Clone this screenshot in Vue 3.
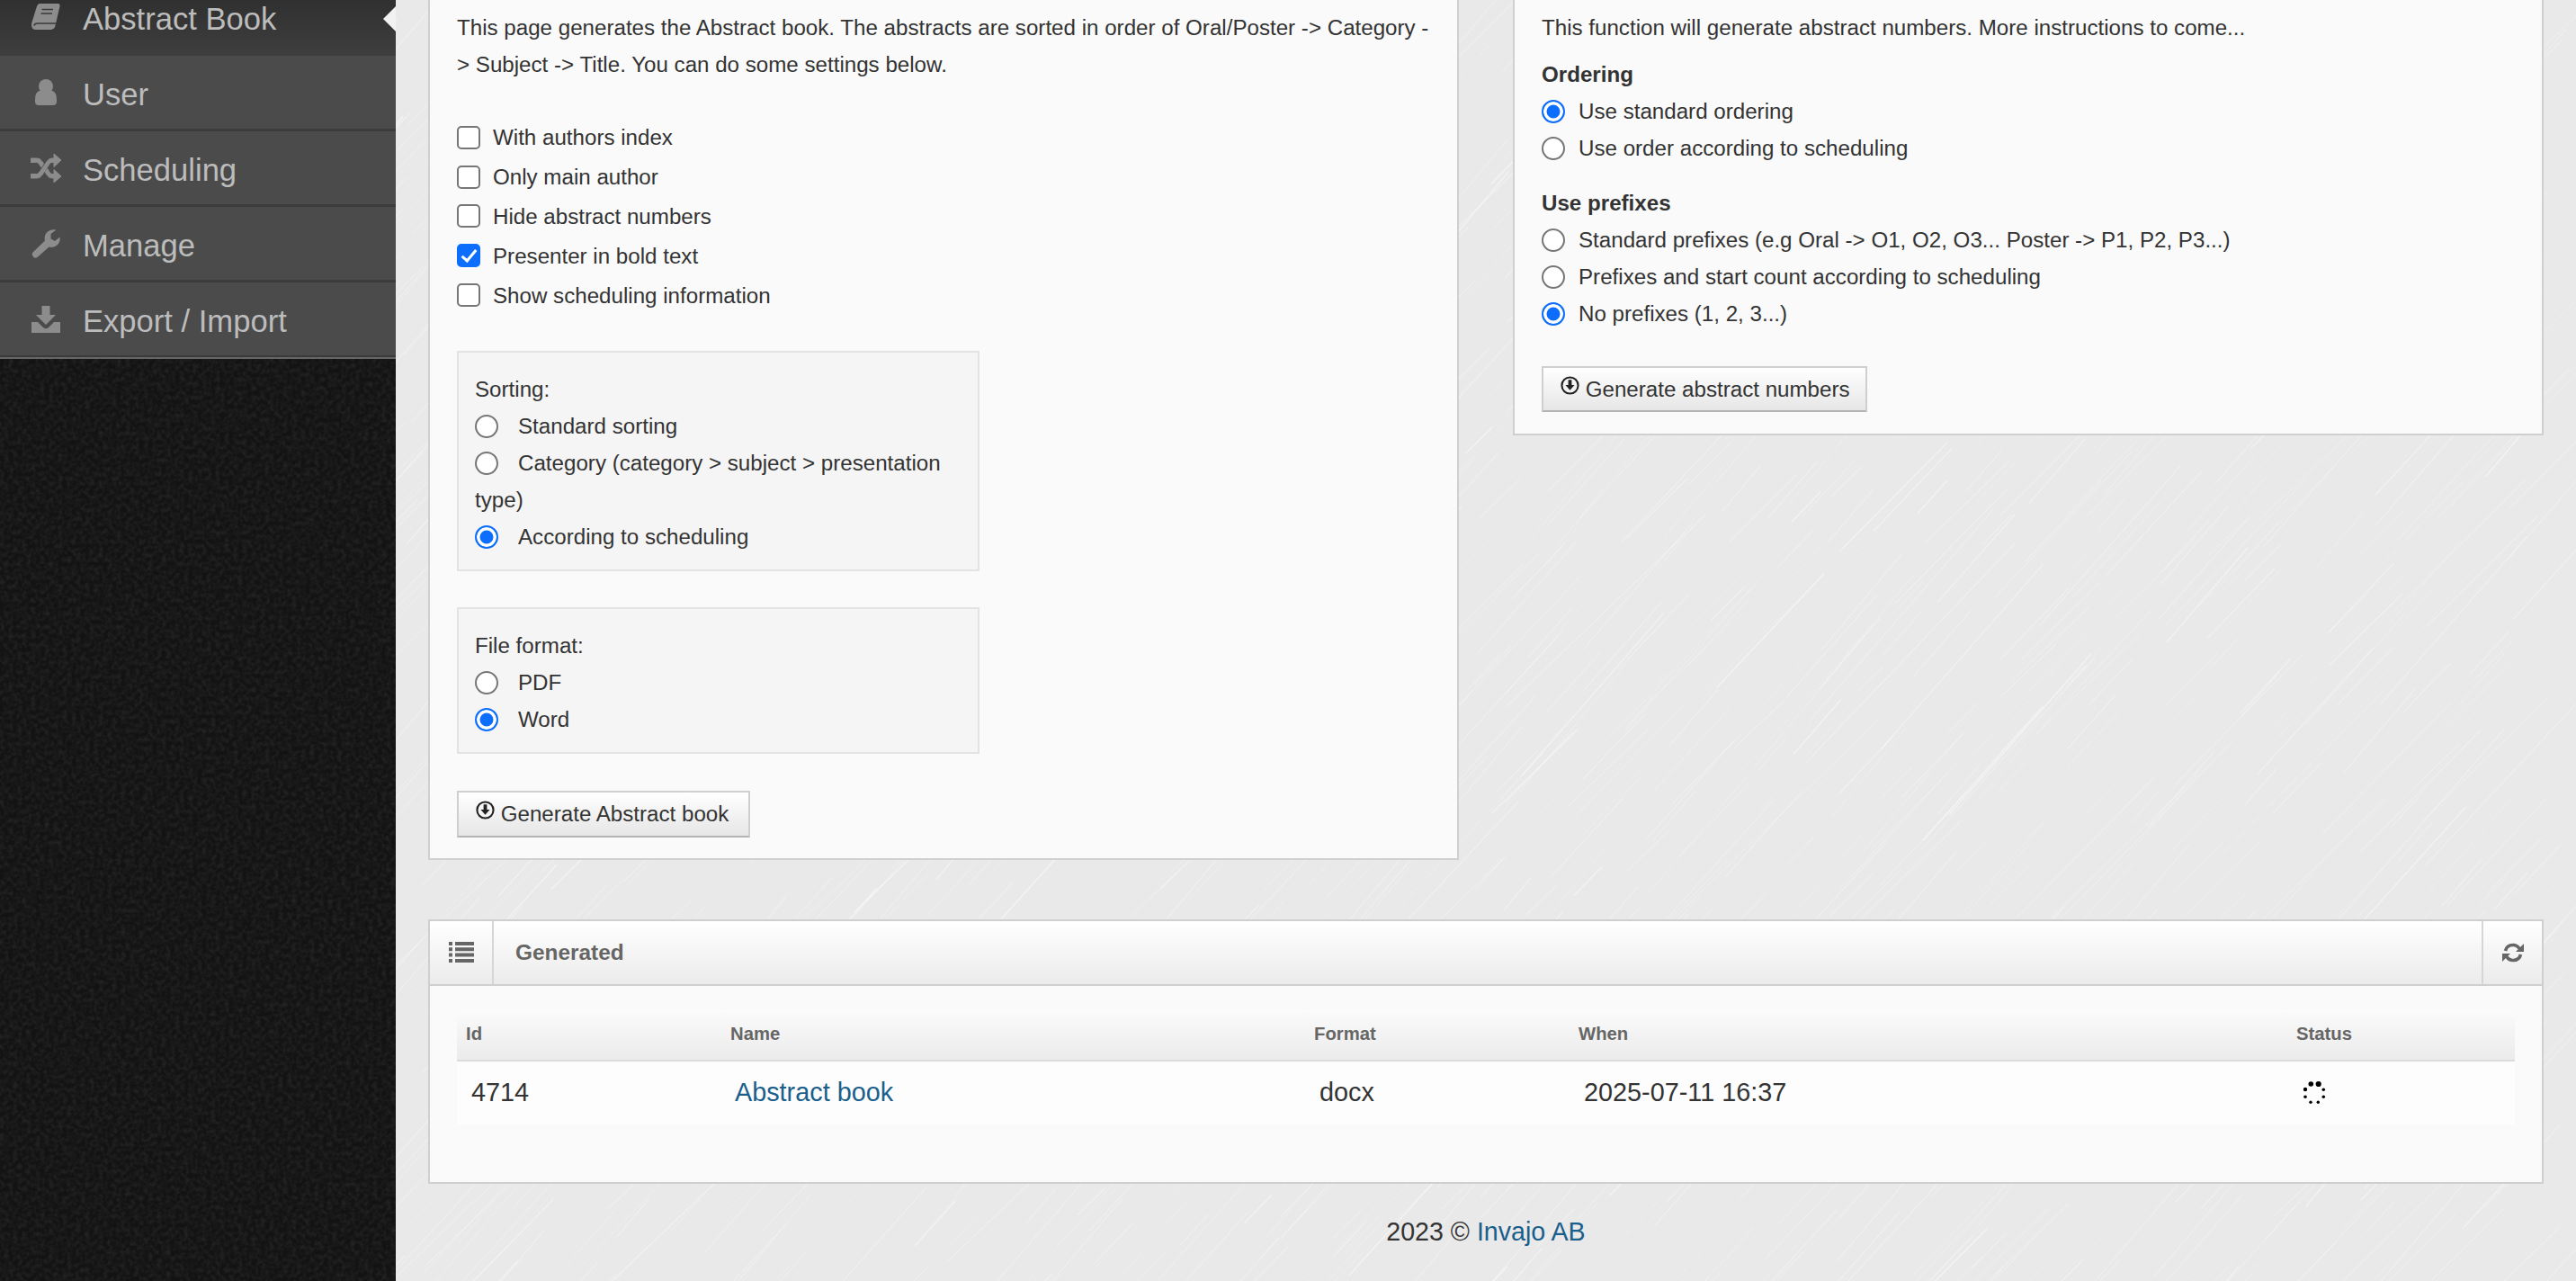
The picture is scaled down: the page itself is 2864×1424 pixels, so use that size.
<script setup>
function makeLines() {
  let s = 12345
  const r = () => {
    s = (s * 16807) % 2147483647
    return s / 2147483647
  }
  const out = []
  for (let i = 0; i < 1500; i++) {
    const x = r() * 2500 + 300
    const y = r() * 1550
    const len = 30 + r() * r() * 220
    const k = 0.95 + r() * 0.25
    out.push({
      id: i,
      x1: x,
      y1: y,
      x2: x + len,
      y2: y - len * k,
      o: 0.14 + r() * 0.32,
      w: r() > 0.8 ? 1.5 : 1
    })
  }
  return out
}
const lines = makeLines()

const checks = [
  { label: 'With authors index', on: false },
  { label: 'Only main author', on: false },
  { label: 'Hide abstract numbers', on: false },
  { label: 'Presenter in bold text', on: true },
  { label: 'Show scheduling information', on: false }
]
const sorting = [
  { label: 'Standard sorting', on: false },
  { label: 'Category (category > subject > presentation type)', on: false },
  { label: 'According to scheduling', on: true }
]
const formats = [
  { label: 'PDF', on: false },
  { label: 'Word', on: true }
]
const ordering = [
  { label: 'Use standard ordering', on: true },
  { label: 'Use order according to scheduling', on: false }
]
const prefixes = [
  { label: 'Standard prefixes (e.g Oral -> O1, O2, O3... Poster -> P1, P2, P3...)', on: false },
  { label: 'Prefixes and start count according to scheduling', on: false },
  { label: 'No prefixes (1, 2, 3...)', on: true }
]
const dots = [
  [-3.7, -10, 2.8], [4.7, -10, 3.1], [-10, -4, 2.2], [10.3, -3.7, 1.8],
  [-10, 4.3, 1.8], [10.3, 4.3, 1.8], [-4, 10.3, 1.7], [4.3, 10.3, 1.7]
]
</script>

<template>
  <div class="app">
    <svg class="texture" width="2864" height="1424" aria-hidden="true">
      <line
        v-for="l in lines"
        :key="l.id"
        :x1="l.x1"
        :y1="l.y1"
        :x2="l.x2"
        :y2="l.y2"
        stroke="#fff"
        :stroke-opacity="l.o"
        :stroke-width="l.w"
      />
    </svg>

    <aside class="sidebar">
      <svg class="noise" width="440" height="1424" aria-hidden="true">
        <filter id="grain">
          <feTurbulence type="fractalNoise" baseFrequency="0.2" numOctaves="2" seed="4" />
          <feColorMatrix type="matrix" values="0 0 0 0 0.4  0 0 0 0 0.4  0 0 0 0 0.4  0.22 0 0 0 -0.08" />
        </filter>
        <rect width="440" height="1424" filter="url(#grain)" />
      </svg>
      <nav class="menu">
        <a class="item active">
          <svg class="ico" viewBox="0 0 32 30">
            <path d="M9 0H29.500Q32 0 31.500 3L26.500 24.500Q26 28 22 29H5Q0 29 0 24Q0 22 .7 20L6 3Q7 0 9 0Z" />
            <path class="cut" d="M11.500 6.500H24M10.500 11H23M3 24.500Q3.500 22 6.500 22H27" />
          </svg>
          <span>Abstract Book</span>
          <i class="arrow"></i>
        </a>
        <a class="item">
          <svg class="ico" viewBox="0 0 32 32">
            <circle cx="16" cy="9" r="8" />
            <path d="M4 26V23Q4 14 11 13.500Q16 17.500 21 13.500Q28 14 28 23V26Q28 30 24 30H8Q4 30 4 26Z" />
          </svg>
          <span>User</span>
        </a>
        <a class="item">
          <svg class="ico shuffle" viewBox="0 0 34 32">
            <path d="M0 5H7Q10.500 5 12.500 8L14.500 11L11.800 15L9 10.500Q8 9.500 6.500 9.500H0ZM0 27V22.500H6.500Q8 22.500 9 21.500L18.500 8Q20.500 5 24 5H26V0L34 7L26 14.500V9.500H24Q22.500 9.500 21.500 10.500L12.500 24Q10.500 27 7 27ZM16 20L18.800 16.500L21.500 21Q22.500 22.500 24 22.500H26V17.500L34 25L26 32V27H24Q20.500 27 18.500 24Z" />
          </svg>
          <span>Scheduling</span>
        </a>
        <a class="item">
          <svg class="ico" viewBox="0 0 32 32">
            <path d="M1.500 25.500L15 12.500Q13.500 6.500 18 2.500Q22 -.5 27.500 .5L21.500 5V10.500L26 13L31.500 8.500Q32.500 14 28.500 17.500Q24.500 21 19.500 19.500L6.500 31Q4.500 32.500 2.500 31Q-.5 28 1.500 25.500Z" />
          </svg>
          <span>Manage</span>
        </a>
        <a class="item last">
          <svg class="ico" viewBox="0 0 32 30">
            <path d="M11.500 0H20.500V10H27L16 21L5 10H11.500Z" />
            <path d="M0 18H7L13 24Q16 26.500 19 24L25 18H32V30H0Z" />
          </svg>
          <span>Export / Import</span>
        </a>
      </nav>
    </aside>

    <main class="main">
      <div class="top">
        <section class="panel left">
          <p class="intro">This page generates the Abstract book. The abstracts are sorted in order of Oral/Poster -&gt; Category -&gt; Subject -&gt; Title. You can do some settings below.</p>
          <div class="checks">
            <label v-for="c in checks" :key="c.label" class="check">
              <input type="checkbox" :checked="c.on" />
              <span>{{ c.label }}</span>
            </label>
          </div>
          <div class="well">
            <div>Sorting:</div>
            <label v-for="o in sorting" :key="o.label" class="inline-radio">
              <input type="radio" name="sorting" :checked="o.on" />{{ o.label }}
            </label>
          </div>
          <div class="well">
            <div>File format:</div>
            <label v-for="o in formats" :key="o.label" class="inline-radio">
              <input type="radio" name="format" :checked="o.on" />{{ o.label }}
            </label>
          </div>
          <button class="btn btn-book" type="button">
            <svg class="btn-ico" viewBox="0 0 22 22">
              <circle cx="11" cy="11" r="9.500" />
              <path d="M9 4.500H13V10.500H16.300L11 16.500L5.700 10.500H9Z" />
            </svg>
            Generate Abstract book
          </button>
        </section>

        <section class="panel right">
          <p class="lead">This function will generate abstract numbers. More instructions to come...</p>
          <h4>Ordering</h4>
          <label v-for="o in ordering" :key="o.label" class="radio-row">
            <input type="radio" name="ordering" :checked="o.on" />
            <span>{{ o.label }}</span>
          </label>
          <h4 class="second">Use prefixes</h4>
          <label v-for="o in prefixes" :key="o.label" class="radio-row">
            <input type="radio" name="prefix" :checked="o.on" />
            <span>{{ o.label }}</span>
          </label>
          <button class="btn btn-num" type="button">
            <svg class="btn-ico" viewBox="0 0 22 22">
              <circle cx="11" cy="11" r="9.500" />
              <path d="M9 4.500H13V10.500H16.300L11 16.500L5.700 10.500H9Z" />
            </svg>
            Generate abstract numbers
          </button>
        </section>
      </div>

      <section class="panel generated">
        <header class="head">
          <div class="head-ico">
            <svg width="28" height="23" viewBox="0 0 28 23">
              <path d="M0 0H4V4H0ZM7 0H28V4H7ZM0 6.300H4V10.300H0ZM7 6.300H28V10.300H7ZM0 12.600H4V16.600H0ZM7 12.600H28V16.600H7ZM0 18.900H4V22.900H0ZM7 18.900H28V22.900H7Z" />
            </svg>
          </div>
          <h3>Generated</h3>
          <div class="head-refresh">
            <svg width="24" height="24" viewBox="0 0 24 24">
              <path class="arc" d="M3.500 10Q5 3.500 12 3.500Q16.500 3.500 19 7.500" />
              <path d="M24 2V11H15Z" />
              <path class="arc" d="M20.500 14Q19 20.500 12 20.500Q7.500 20.500 5 16.500" />
              <path d="M0 22V13H9Z" />
            </svg>
          </div>
        </header>
        <div class="body">
          <table>
            <colgroup>
              <col class="c1" /><col class="c2" /><col class="c3" /><col class="c4" /><col class="c5" />
            </colgroup>
            <thead>
              <tr><th>Id</th><th>Name</th><th>Format</th><th>When</th><th>Status</th></tr>
            </thead>
            <tbody>
              <tr>
                <td>4714</td>
                <td><a class="link name">Abstract book</a></td>
                <td>docx</td>
                <td>2025-07-11 16:37</td>
                <td>
                  <svg class="spin" width="28" height="28" viewBox="-14 -14 28 28">
                    <circle v-for="(d, i) in dots" :key="i" :cx="d[0]" :cy="d[1]" :r="d[2]" />
                  </svg>
                </td>
              </tr>
            </tbody>
          </table>
        </div>
      </section>

      <footer class="foot">2023 © <a class="link">Invajo AB</a></footer>
    </main>
  </div>
</template>

<style scoped>
.app {
  position: relative;
  display: flex;
  width: 2864px;
  height: 1424px;
  overflow: hidden;
  background: #e9e9e9;
  font-family: "Liberation Sans", Arial, sans-serif;
  font-size: 24.150px;
  line-height: 41px;
  color: #333;
}
.texture {
  position: absolute;
  left: 0;
  top: 0;
}
.sidebar {
  position: relative;
  flex: 0 0 440px;
  background: #131313;
}
.noise {
  position: absolute;
  left: 0;
  top: 0;
}
.menu {
  position: relative;
  display: flex;
  flex-direction: column;
}
.item {
  position: relative;
  display: flex;
  align-items: center;
  height: 84px;
  box-sizing: border-box;
  padding: 5px 0 0 35px;
  background: #4b4b4b;
  border-bottom: 3px solid #3b3b3b;
  color: #bcbcbc;
  font-size: 34.600px;
  line-height: 40px;
}
.item span {
  margin-left: 25px;
}
.item.active {
  height: 62px;
  padding-top: 0;
  padding-bottom: 20px;
  background: linear-gradient(#303030, #3e3e3e);
  border-bottom: 0;
}
.item.last {
  height: 85px;
  padding-top: 0;
  border-bottom: 0;
  box-shadow: inset 0 -2px 0 #666, inset 0 -4px 0 #3b3b3b;
}
.ico {
  flex: 0 0 32px;
  width: 32px;
  height: 32px;
  fill: #8c8c8c;
  transform: translateY(-2px);
}
.shuffle {
  stroke: #8c8c8c;
  stroke-width: 1;
  transform: translateY(-2px) scale(1.06);
}
.cut {
  fill: none;
  stroke: #3a3a3a;
  stroke-width: 1.600;
}
.arrow {
  position: absolute;
  right: 0;
  top: 7px;
  width: 0;
  height: 0;
  border-top: 14px solid transparent;
  border-bottom: 14px solid transparent;
  border-right: 14px solid #f2f2f2;
}
.main {
  position: relative;
  flex: 1;
  min-width: 0;
  padding: 0 36px;
}
.top {
  display: grid;
  grid-template-columns: 1146px 1146px;
  gap: 60px;
  align-items: start;
}
.panel {
  box-sizing: border-box;
  background: #fafafa;
  border: 2px solid #cfcfcf;
}
.left,
.right {
  border-top: 0;
}
.left {
  padding: 10px 30px 23px;
}
.right {
  padding: 10px 30px 24px;
}
p {
  margin: 0;
}
.checks {
  display: flex;
  flex-direction: column;
  margin-top: 39px;
  margin-bottom: 40px;
}
.check {
  display: flex;
  align-items: center;
  height: 43.800px;
}
.check span {
  margin-left: 14px;
}
input {
  appearance: none;
  box-sizing: border-box;
  position: relative;
  flex: none;
  width: 26px;
  height: 26px;
  margin: 0;
  background: #fff;
  border: 2px solid #767676;
}
input[type="checkbox"] {
  border-radius: 5px;
}
input[type="checkbox"]:checked {
  background: #0d6efd;
  border-color: #0d6efd;
}
input[type="checkbox"]:checked::after {
  content: "";
  position: absolute;
  left: 7px;
  top: 1px;
  width: 6px;
  height: 14px;
  border: solid #fff;
  border-width: 0 3.500px 3.500px 0;
  transform: rotate(40deg);
}
input[type="radio"] {
  border-radius: 50%;
}
input[type="radio"]:checked {
  background: #0d6efd;
  border-color: #0d6efd;
  box-shadow: inset 0 0 0 3.500px #fff;
}
.well {
  box-sizing: border-box;
  width: 581px;
  margin-bottom: 40px;
  padding: 20px 18px 16px;
  background: #f5f5f5;
  border: 2px solid #e3e3e3;
}
.inline-radio {
  display: block;
}
.inline-radio input {
  vertical-align: middle;
  margin-right: 22px;
  top: -2px;
}
.btn {
  display: block;
  box-sizing: border-box;
  margin: 0;
  padding: 0;
  text-align: left;
  font: inherit;
  color: #333;
  white-space: nowrap;
  background: linear-gradient(#fff, #e6e6e6);
  border: 2px solid #cfcfcf;
  border-bottom-color: #b4b4b4;
  border-radius: 0;
}
.btn-book {
  width: 326px;
  height: 52px;
  margin-top: 41px;
  padding-left: 19px;
}
.btn-num {
  width: 362px;
  height: 51px;
  margin-top: 38px;
  padding-left: 19px;
}
.btn-ico {
  width: 21px;
  height: 21px;
  vertical-align: 2px;
}
.btn-ico circle {
  fill: none;
  stroke: #222;
  stroke-width: 2.200;
}
.btn-ico path {
  fill: #222;
}
h4 {
  margin: 11px 0 0;
  font-size: 24.150px;
  font-weight: 700;
  line-height: 41px;
}
h4.second {
  margin-top: 20px;
}
.radio-row {
  display: flex;
  align-items: center;
  height: 41px;
}
.radio-row span {
  margin-left: 15px;
}
.generated {
  margin-top: 66px;
  height: 294px;
}
.head {
  display: flex;
  align-items: stretch;
  box-sizing: border-box;
  height: 72px;
  background: linear-gradient(#fff, #ebebeb);
  border-bottom: 2px solid #cfcfcf;
}
.head-ico {
  display: flex;
  align-items: center;
  justify-content: center;
  flex: 0 0 71px;
  border-right: 2px solid #d6d6d6;
  box-sizing: border-box;
}
.head svg path {
  fill: #666;
}
.head h3 {
  flex: 1;
  margin: 0 0 0 24px;
  align-self: center;
  font-size: 24.400px;
  font-weight: 700;
  color: #666;
}
.head-refresh {
  display: flex;
  align-items: center;
  justify-content: center;
  flex: 0 0 67px;
  box-sizing: border-box;
  border-left: 2px solid #d6d6d6;
}
.head svg .arc {
  fill: none;
  stroke: #666;
  stroke-width: 3.600;
}
.body {
  padding: 26px 30px 0;
}
table {
  width: 2288px;
  table-layout: fixed;
  border-collapse: collapse;
}
.c1 { width: 294px; }
.c2 { width: 649px; }
.c3 { width: 294px; }
.c4 { width: 798px; }
.c5 { width: 253px; }
th {
  height: 57px;
  padding: 0 0 0 10px;
  box-sizing: border-box;
  text-align: left;
  font-size: 20.300px;
  font-weight: 700;
  color: #666;
  background: linear-gradient(#fbfbfb, #ebebeb);
  border-bottom: 2px solid #dcdcdc;
}
td {
  height: 71px;
  padding: 0 0 0 16px;
  box-sizing: border-box;
  font-size: 28.800px;
  background: #fdfdfd;
}
.name {
  margin-left: -1px;
}
.link {
  color: #1a5f8c;
}
.spin {
  display: block;
  fill: #000;
}
.foot {
  margin-top: 33px;
  text-align: center;
  font-size: 28.600px;
}
</style>

<style>
body {
  background: #e9e9e9;
}
</style>
